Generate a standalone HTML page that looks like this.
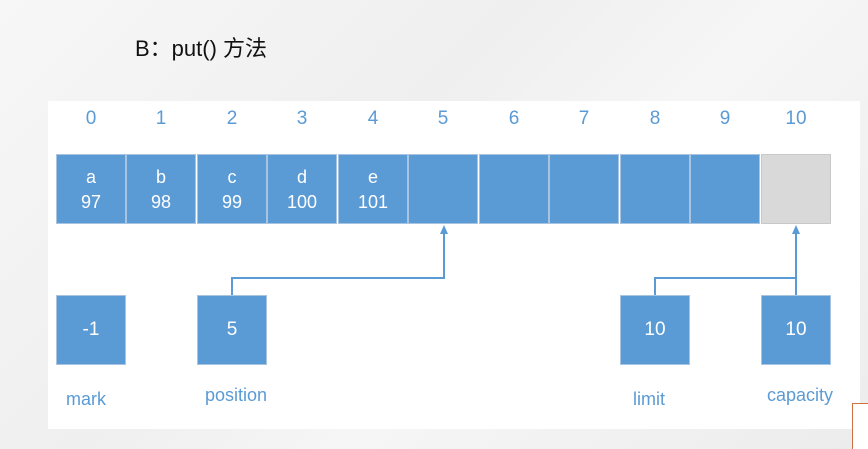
<!DOCTYPE html>
<html style="background:#f2f2f2"><head><style>
html,body{margin:0;width:868px;height:449px;overflow:hidden}
body{background:linear-gradient(135deg,#f7f7f7,#efefef 40%,#f6f6f6 60%,#ececec);font-family:"Liberation Sans","Noto Sans CJK SC",sans-serif;position:relative}
.a{position:absolute}
.panel{left:48px;top:101px;width:812px;height:328px;background:#fff}
.idx{top:108px;width:70px;text-align:center;color:#5b9bd5;font-size:19px}
.cell{top:154px;width:70px;height:70px;background:#5b9bd5;border:1px solid #a9c4e0;box-sizing:border-box;color:#fff;text-align:center;font-size:18px;line-height:25px;padding-top:10px}
.box{top:295px;width:70px;height:70px;background:#5b9bd5;border:1px solid #a9c4e0;box-sizing:border-box;color:#fff;text-align:center;font-size:19px;line-height:68px}
.lbl{color:#5b9bd5;font-size:18px}
</style></head><body>
<div class="a" style="left:135px;top:31px;font-size:22px;color:#111">B：put() 方法</div>
<div class="a panel"></div>
<div class="a idx" style="left:56px">0</div><div class="a idx" style="left:126px">1</div><div class="a idx" style="left:197px">2</div><div class="a idx" style="left:267px">3</div><div class="a idx" style="left:338px">4</div><div class="a idx" style="left:408px">5</div><div class="a idx" style="left:479px">6</div><div class="a idx" style="left:549px">7</div><div class="a idx" style="left:620px">8</div><div class="a idx" style="left:690px">9</div><div class="a idx" style="left:761px">10</div>
<div class="a cell" style="left:56px">a<br>97</div><div class="a cell" style="left:126px">b<br>98</div><div class="a cell" style="left:197px">c<br>99</div><div class="a cell" style="left:267px">d<br>100</div><div class="a cell" style="left:338px">e<br>101</div><div class="a cell" style="left:408px"></div><div class="a cell" style="left:479px"></div><div class="a cell" style="left:549px"></div><div class="a cell" style="left:620px"></div><div class="a cell" style="left:690px"></div><div class="a cell" style="left:761px;background:#d9d9d9;border-color:#c8c8c8"></div>
<svg class="a" style="left:0;top:0" width="868" height="449">
<g fill="none" stroke="#5b9bd5" stroke-width="2">
<polyline points="232,295 232,278 444,278 444,232"/>
<polyline points="655,295 655,278 796,278"/>
<polyline points="796,295 796,232"/>
</g>
<polygon points="444,225 440,234 448,234" fill="#5b9bd5"/>
<polygon points="796,225 792,234 800,234" fill="#5b9bd5"/>
</svg>
<div class="a box" style="left:56px">-1</div><div class="a box" style="left:197px">5</div><div class="a box" style="left:620px">10</div><div class="a box" style="left:761px">10</div>
<div class="a lbl" style="left:66px;top:389px">mark</div>
<div class="a lbl" style="left:205px;top:385px">position</div>
<div class="a lbl" style="left:633px;top:389px">limit</div>
<div class="a lbl" style="left:767px;top:385px">capacity</div>
<div class="a" style="left:852px;top:403px;width:20px;height:50px;border:1px solid #d07040;background:#fff"></div>
</body></html>
